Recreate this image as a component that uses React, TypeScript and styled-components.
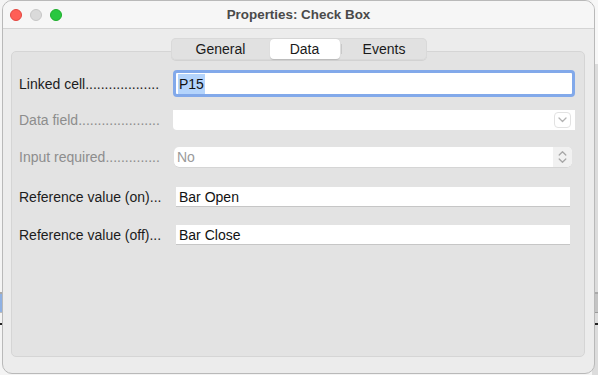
import React from 'react';
import styled, { createGlobalStyle } from 'styled-components';

const GlobalStyle = createGlobalStyle`
  html, body {
    margin: 0;
    padding: 0;
  }
  body {
    width: 598px;
    height: 375px;
    overflow: hidden;
    font-family: "Liberation Sans", Arial, sans-serif;
    background:
      linear-gradient(to bottom, transparent 292px, #a9a9a9 292px, #a9a9a9 294px, #8fb1e3 294px, #8fb1e3 312px, #bdbdbd 312px, #bdbdbd 313px, transparent 313px, transparent 323px, #222 323px, #222 325px, transparent 325px) left top / 4px 100% no-repeat,
      linear-gradient(to bottom, transparent 292px, #a9a9a9 292px, #a9a9a9 294px, #c4c4c4 294px, #c4c4c4 312px, #9a9a9a 312px, #9a9a9a 313px, transparent 313px, transparent 323px, #222 323px, #222 325px, transparent 325px) right top / 6px 100% no-repeat,
      linear-gradient(to bottom, #f7f7f7 0, #f7f7f7 64px, transparent 64px) right top / 6px 100% no-repeat,
      linear-gradient(to right, #f4f4f4 0, #f4f4f4 592px, #dcdcdc 592px);
  }
`;

const Page = styled.div`
  width: 598px;
  height: 375px;
  padding: 0 3px 1px 2px;
  box-sizing: border-box;
  display: flex;
`;

const Window = styled.div`
  flex: 1;
  display: flex;
  flex-direction: column;
  background: #ececec;
  border: 1px solid #b9b9b9;
  border-radius: 10px;
  overflow: hidden;
`;

const TitleBar = styled.div`
  height: 27px;
  flex-shrink: 0;
  display: grid;
  grid-template-columns: 1fr auto 1fr;
  align-items: center;
  background: #f6f6f6;
  border-bottom: 1px solid #d4d4d4;
`;

const Lights = styled.div`
  display: flex;
  gap: 8px;
  padding-left: 7px;
`;

const Light = styled.span<{ $fill: string; $edge: string }>`
  width: 12px;
  height: 12px;
  border-radius: 50%;
  box-sizing: border-box;
  background: ${p => p.$fill};
  border: 0.5px solid ${p => p.$edge};
`;

const Title = styled.div`
  font-size: 13.4px;
  font-weight: 700;
  color: #4a4a4a;
`;

const Body = styled.div`
  flex: 1;
  display: flex;
  flex-direction: column;
  padding: 9px 9px 16px 8px;
`;

const TabBar = styled.div`
  align-self: center;
  position: relative;
  z-index: 1;
  display: flex;
  align-items: center;
  height: 22px;
  margin-bottom: -9px;
  margin-left: 1px;
  padding: 1px;
  box-sizing: border-box;
  background: #e1e1e1;
  border-radius: 5px;
  box-shadow: inset 0 0 0 1px #d9d9d9, 0 1px 0 #d2d2d2;
`;

const Tab = styled.div<{ $width: number; $active?: boolean }>`
  width: ${p => p.$width}px;
  height: 20px;
  display: flex;
  align-items: center;
  justify-content: center;
  font-size: 14px;
  color: #1a1a1a;
  border-radius: 4px;
  background: ${p => (p.$active ? '#ffffff' : 'transparent')};
  box-shadow: ${p => (p.$active ? '0 0.5px 1px rgba(0,0,0,0.15)' : 'none')};
`;

const TabDivider = styled.span`
  width: 1px;
  height: 10px;
  background: #c9c9c9;
  margin: 0 1px;
`;

const Panel = styled.div`
  flex: 1;
  display: flex;
  flex-direction: column;
  background: #e3e3e3;
  border: 1px solid #d5d5d5;
  border-radius: 5px;
  padding: 18px 0 0 7px;
`;

const Row = styled.div<{ $gap: number; $height: number }>`
  display: flex;
  align-items: center;
  height: ${p => p.$height}px;
  margin-top: ${p => p.$gap}px;
`;

const Label = styled.div<{ $disabled?: boolean }>`
  width: 154px;
  flex-shrink: 0;
  font-size: 14px;
  white-space: nowrap;
  overflow: hidden;
  color: ${p => (p.$disabled ? '#8d8d8d' : '#1c1c1c')};
`;

const FocusedInput = styled.div`
  width: 402px;
  height: 27px;
  box-sizing: border-box;
  border: 3px solid #82a9ea;
  border-radius: 4px;
  background: #ffffff;
  display: flex;
  align-items: center;
  padding-left: 2px;
  font-size: 14px;
  color: #111;
`;

const Selection = styled.span`
  background: #b4d4fc;
  padding: 1px 1px;
  line-height: 18px;
`;

const Combo = styled.div`
  width: 402px;
  height: 20px;
  box-sizing: border-box;
  background: #ffffff;
  border-radius: 0 0 0 4px;
  display: flex;
  align-items: center;
  justify-content: flex-end;
  padding-right: 4px;
`;

const DropButton = styled.div`
  width: 17px;
  height: 16px;
  box-sizing: border-box;
  border: 1px solid #e2e2e2;
  border-radius: 4px;
  display: flex;
  align-items: center;
  justify-content: center;
`;

const Spinner = styled.div`
  width: 398px;
  height: 20px;
  margin-left: 1px;
  display: flex;
  border-radius: 5px;
  overflow: hidden;
  background: #ffffff;
  box-shadow: 0 0.5px 0.5px rgba(0,0,0,0.12);
`;

const SpinnerText = styled.div`
  flex: 1;
  display: flex;
  align-items: center;
  padding-left: 3px;
  font-size: 14px;
  color: #9a9a9a;
`;

const SpinnerArrows = styled.div`
  width: 19px;
  background: #f1f1f1;
  display: flex;
  align-items: center;
  justify-content: center;
`;

const TextField = styled.div`
  width: 394px;
  height: 20px;
  margin-left: 3px;
  box-sizing: border-box;
  background: #ffffff;
  border-bottom: 1px solid #c6c6c6;
  display: flex;
  align-items: center;
  padding-left: 3px;
  font-size: 14px;
  color: #111;
`;

const ChevronDown = () => (
  <svg width="9" height="6" viewBox="0 0 9 6">
    <path d="M1 1 L4.5 4.5 L8 1" fill="none" stroke="#b3b3b3" strokeWidth="1.3" strokeLinecap="round" strokeLinejoin="round" />
  </svg>
);

const UpDown = () => (
  <svg width="9" height="14" viewBox="0 0 9 14">
    <path d="M1.2 5 L4.5 1.7 L7.8 5" fill="none" stroke="#a8a8a8" strokeWidth="1.3" strokeLinecap="round" strokeLinejoin="round" />
    <path d="M1.2 9 L4.5 12.3 L7.8 9" fill="none" stroke="#a8a8a8" strokeWidth="1.3" strokeLinecap="round" strokeLinejoin="round" />
  </svg>
);

const App = () => {
  return (
    <>
      <GlobalStyle />
      <Page>
        <Window>
          <TitleBar>
            <Lights>
              <Light $fill="#ff5f57" $edge="#e2463f" />
              <Light $fill="#dadada" $edge="#c6c6c6" />
              <Light $fill="#29c740" $edge="#1dad2b" />
            </Lights>
            <Title>Properties: Check Box</Title>
            <div />
          </TitleBar>
          <Body>
            <TabBar>
              <Tab $width={98}>General</Tab>
              <Tab $width={70} $active>Data</Tab>
              <TabDivider />
              <Tab $width={83}>Events</Tab>
            </TabBar>
            <Panel>
              <Row $gap={0} $height={27}>
                <Label>Linked cell...................</Label>
                <FocusedInput>
                  <Selection>P15</Selection>
                </FocusedInput>
              </Row>
              <Row $gap={13} $height={20}>
                <Label $disabled>Data field.....................</Label>
                <Combo>
                  <DropButton>
                    <ChevronDown />
                  </DropButton>
                </Combo>
              </Row>
              <Row $gap={17} $height={20}>
                <Label $disabled>Input required..............</Label>
                <Spinner>
                  <SpinnerText>No</SpinnerText>
                  <SpinnerArrows>
                    <UpDown />
                  </SpinnerArrows>
                </Spinner>
              </Row>
              <Row $gap={20} $height={20}>
                <Label>Reference value (on)...</Label>
                <TextField>Bar Open</TextField>
              </Row>
              <Row $gap={18} $height={20}>
                <Label>Reference value (off)...</Label>
                <TextField>Bar Close</TextField>
              </Row>
            </Panel>
          </Body>
        </Window>
      </Page>
    </>
  );
};

export default App;
